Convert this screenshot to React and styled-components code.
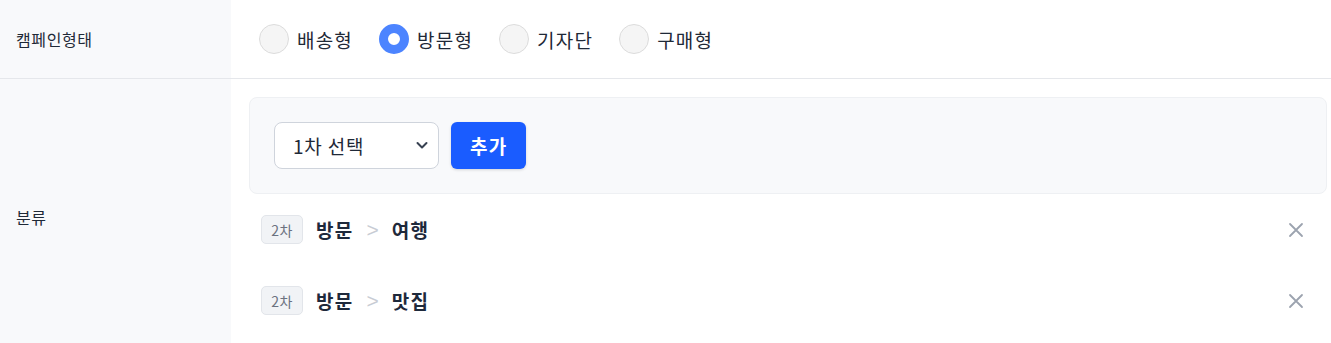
import React, { useState } from "react";
import styled, { createGlobalStyle } from "styled-components";

const GlobalStyle = createGlobalStyle`
  body {
    margin: 0;
    background: #ffffff;
    font-family: "Noto Sans CJK KR", "Noto Sans", sans-serif;
    color: #1f2937;
  }
`;

const FormTable = styled.div`
  display: grid;
  grid-template-columns: 231px 1fr;
`;

const Label = styled.div`
  background: #f8f9fb;
  padding: 0 16px;
  display: flex;
  align-items: center;
  font-size: 16px;
  letter-spacing: 0.6px;
  color: #1f2937;
  border-bottom: ${(props) => (props.last ? "none" : "1px solid #e5e7eb")};
`;

const Field = styled.div`
  padding: ${(props) => props.pad || "0 18px"};
  border-bottom: ${(props) => (props.last ? "none" : "1px solid #e5e7eb")};
  min-height: ${(props) => props.minH || "auto"};
  display: flex;
  flex-direction: column;
  justify-content: center;
`;

const RadioGroup = styled.div`
  display: flex;
  column-gap: 26px;
  padding-left: 10px;
`;

const RadioOption = styled.label`
  display: flex;
  align-items: center;
  column-gap: 8px;
  font-size: 19px;
  letter-spacing: 1.2px;
  color: #1f2937;
  cursor: pointer;
`;

const RadioCircle = styled.span`
  width: 30px;
  height: 30px;
  border-radius: 50%;
  box-sizing: border-box;
  background: ${(props) => (props.checked ? "#ffffff" : "#f5f5f5")};
  border: ${(props) =>
    props.checked ? "9px solid #4c84ff" : "1px solid #dcdcdc"};
`;

const AddBox = styled.div`
  background: #f8f9fb;
  border: 1px solid #eef0f3;
  border-radius: 8px;
  padding: 24px 24px;
  display: flex;
  align-items: center;
  column-gap: 12px;
`;

const SelectWrap = styled.div`
  position: relative;
  width: 165px;
  height: 47px;
  .chevron {
    position: absolute;
    right: 10px;
    top: 16px;
    pointer-events: none;
  }
`;

const Select = styled.select`
  appearance: none;
  width: 100%;
  height: 100%;
  box-sizing: border-box;
  border: 1px solid #cfd4dc;
  border-radius: 8px;
  background: #ffffff;
  padding: 0 18px;
  font-family: inherit;
  font-size: 19px;
  letter-spacing: 0.8px;
  color: #1f2937;
`;

const AddButton = styled.button`
  height: 47px;
  padding: 0 19px;
  border: none;
  border-radius: 6px;
  background: #1a5cff;
  color: #ffffff;
  font-family: inherit;
  font-size: 19px;
  letter-spacing: 1.2px;
  font-weight: 700;
  box-shadow: 0 1px 3px rgba(0, 0, 0, 0.15);
`;

const ItemRow = styled.div`
  display: flex;
  align-items: center;
  height: 71px;
  padding: 0 23px 0 12px;
`;

const Badge = styled.span`
  display: inline-flex;
  align-items: center;
  justify-content: center;
  height: 29px;
  width: 42px;
  box-sizing: border-box;
  border: 1px solid #e2e5ea;
  border-radius: 5px;
  background: #f1f3f6;
  color: #6b7280;
  font-size: 14px;
  letter-spacing: 0.5px;
`;

const Path = styled.span`
  display: flex;
  align-items: center;
  column-gap: 13px;
  margin-left: 13px;
  font-size: 19px;
  letter-spacing: 1.3px;
  font-weight: 700;
  color: #1e293b;
  flex: 1;
  .sep {
    color: #c8ccd4;
    font-weight: 400;
    font-size: 21px;
    letter-spacing: 0;
    font-family: "Liberation Sans", sans-serif;
  }
`;

const RemoveButton = styled.button`
  border: none;
  background: none;
  padding: 0;
  display: flex;
  cursor: pointer;
`;

const IconX = () => (
  <svg width="16" height="16" viewBox="0 0 16 16" fill="none">
    <path d="M2 2L14 14M14 2L2 14" stroke="#9ca3af" strokeWidth="1.8" strokeLinecap="round" />
  </svg>
);

const IconChevron = () => (
  <svg className="chevron" width="14" height="14" viewBox="0 0 14 14" fill="none">
    <path d="M2.5 5L7 9.5L11.5 5" stroke="#374151" strokeWidth="2" strokeLinecap="round" strokeLinejoin="round" />
  </svg>
);

const types = ["배송형", "방문형", "기자단", "구매형"];
const items = [
  { level: "2차", path: ["방문", "여행"] },
  { level: "2차", path: ["방문", "맛집"] },
];

const App = () => {
  const [type, setType] = useState("방문형");
  return (
    <>
      <GlobalStyle />
      <FormTable>
        <Label>캠페인형태</Label>
        <Field minH="78px">
          <RadioGroup>
            {types.map((t) => (
              <RadioOption key={t} onClick={() => setType(t)}>
                <RadioCircle checked={type === t} />
                {t}
              </RadioOption>
            ))}
          </RadioGroup>
        </Field>

        <Label last>분류</Label>
        <Field last pad="18px 4px 18px 18px">
          <AddBox>
            <SelectWrap>
              <Select defaultValue="">
                <option value="">1차 선택</option>
                <option>배송</option>
                <option>방문</option>
              </Select>
              <IconChevron />
            </SelectWrap>
            <AddButton>추가</AddButton>
          </AddBox>
          {items.map((item, i) => (
            <ItemRow key={i}>
              <Badge>{item.level}</Badge>
              <Path>
                <span>{item.path[0]}</span>
                <span className="sep">&gt;</span>
                <span>{item.path[1]}</span>
              </Path>
              <RemoveButton>
                <IconX />
              </RemoveButton>
            </ItemRow>
          ))}
        </Field>
      </FormTable>
    </>
  );
};

export default App;
